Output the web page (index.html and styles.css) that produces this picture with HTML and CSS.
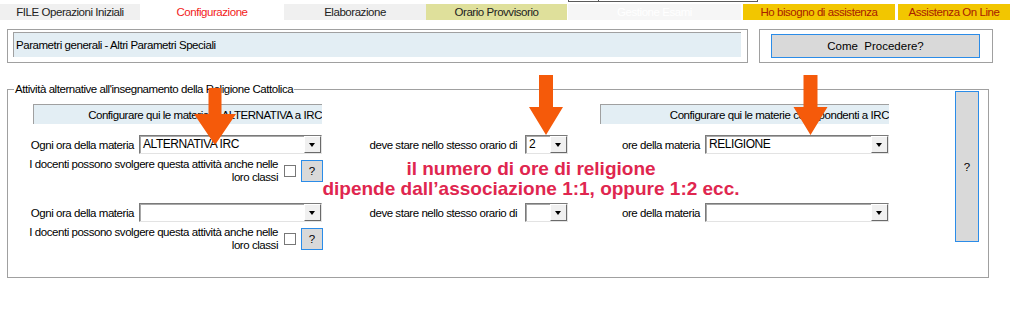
FILE: index.html
```html
<!DOCTYPE html>
<html>
<head>
	<title>Configurazione</title>
	<meta charset="UTF-8">
	<link rel="stylesheet" href="styles.css">
</head>
<body>
	<nav class="tabs">
		<span class="tab tab-file">FILE Operazioni Iniziali</span>
		<span class="tab tab-active">Configurazione</span>
		<span class="tab tab-elab">Elaborazione</span>
		<span class="tab tab-orario">Orario Provvisorio</span>
		<span class="tab tab-esami">Gestione Esami</span>
		<span class="tab tab-help">Ho bisogno di assistenza</span>
		<span class="tab tab-online">Assistenza On Line</span>
	</nav>
	<div class="popup-edge"><div class="popup-edge-cell"></div></div>

	<div class="header-row">
		<div class="header-box">
			<div class="panel panel-title">Parametri generali - Altri Parametri Speciali</div>
		</div>
		<div class="action-box">
			<button type="button" class="btn btn-wide">Come&nbsp; Procedere?</button>
		</div>
	</div>

	<fieldset class="group">
		<legend>Attività alternative all'insegnamento della Religione Cattolica</legend>
		<div class="group-body">
			<div class="grid">
				<div class="panel panel-left">Configurare qui le materie di ALTERNATIVA a IRC</div>
				<div class="panel panel-right">Configurare qui le materie corrispondenti a IRC</div>

				<!-- first association -->
				<label class="lbl c1">Ogni ora della materia</label>
				<div class="combo c2"><span class="combo-value">ALTERNATIVA IRC</span><span class="combo-btn"></span></div>
				<label class="lbl c3">deve stare nello stesso orario di</label>
				<div class="combo c4"><span class="combo-value">2</span><span class="combo-btn"></span></div>
				<label class="lbl c5">ore della materia</label>
				<div class="combo c6"><span class="combo-value">RELIGIONE</span><span class="combo-btn"></span></div>
				<div class="docenti docenti-first">
					<span class="docenti-text">I docenti possono svolgere questa attività anche nelle<br>loro classi</span>
					<span class="check"></span>
					<button type="button" class="btn btn-small">?</button>
				</div>

				<!-- second association -->
				<label class="lbl c1">Ogni ora della materia</label>
				<div class="combo c2"><span class="combo-value"></span><span class="combo-btn"></span></div>
				<label class="lbl c3">deve stare nello stesso orario di</label>
				<div class="combo c4"><span class="combo-value"></span><span class="combo-btn"></span></div>
				<label class="lbl c5">ore della materia</label>
				<div class="combo c6"><span class="combo-value"></span><span class="combo-btn"></span></div>
				<div class="docenti">
					<span class="docenti-text">I docenti possono svolgere questa attività anche nelle<br>loro classi</span>
					<span class="check"></span>
					<button type="button" class="btn btn-small">?</button>
				</div>
			</div>
			<button type="button" class="btn btn-tall">?</button>

			<p class="note">il numero di ore di religione<br>dipende dall’associazione 1:1, oppure 1:2 ecc.</p>
		</div>
	</fieldset>

	<!-- annotation arrows -->
	<svg class="arrows" width="1010" height="314" viewBox="0 0 1010 314">
		<polygon points="208.5,88 221.5,88 221.5,114 236,114 215,145 194,114 208.5,114"/>
		<polygon points="539,75 553,75 553,107 563,107 546,135 529,107 539,107"/>
		<polygon points="803.5,75 817.5,75 817.5,107 827.5,107 810.5,135 793.5,107 803.5,107"/>
	</svg>
</body>
</html>
```

FILE: styles.css
```css
* { box-sizing: border-box; }
body {
	margin: 0;
	position: relative;
	height: 314px;
	overflow: hidden;
	background: #fff;
	color: #000;
	font-family: "Liberation Sans", Arial, sans-serif;
	font-size: 11.5px;
	letter-spacing: -0.45px;
}

/* top tabs */
.tabs {
	display: flex;
	height: 16px;
	margin-top: 4px;
}

.tab {
	display: flex;
	align-items: center;
	justify-content: center;
	white-space: nowrap;
	color: #222;
}

.tab-file { width: 140px; background: #f0f0f0; }
.tab-active { width: 144px; background: #fff; color: #f21c1c; }
.tab-elab { width: 142px; background: #f0f0f0; }
.tab-orario { width: 141px; background: #dfe09b; }
.tab-esami { width: 173px; margin-left: 1px; background: #f6f6f6; color: #fff; }
.tab-help { width: 152px; margin-left: 2px; background: #f2c600; color: #a82000; }
.tab-online { width: 112px; margin-left: 3px; background: #f2c600; color: #a82000; }

.popup-edge {
	position: absolute;
	top: 0;
	left: 568px;
	width: 190px;
	height: 2px;
	border: 1px solid #5a5a5a;
	border-top: 0;
}

.popup-edge-cell {
	width: 30px;
	height: 1px;
	border-right: 1px solid #5a5a5a;
}

/* title row */
.header-row {
	display: flex;
	margin: 9px 0 0 7px;
}

.header-box {
	width: 741px;
	height: 34px;
	padding: 2px 6px 5px 5px;
	border: 1px solid #a0a0a0;
}

.action-box {
	width: 234px;
	height: 34px;
	margin-left: 11px;
	padding: 4px 0 0 11px;
	border: 1px solid #a0a0a0;
}

.panel {
	display: flex;
	align-items: center;
	background: #e3eef4;
	border-top: 1px solid #a0a0a0;
	border-left: 1px solid #a0a0a0;
	white-space: nowrap;
	overflow: hidden;
}

.panel-title {
	height: 25px;
	padding-left: 2px;
}

.btn {
	padding: 0;
	background: #d9d9d9;
	border: 1px solid #2b8ce8;
	font: inherit;
	color: #000;
}

.btn-wide {
	width: 209px;
	height: 24px;
}

/* group box */
.group {
	width: 982px;
	height: 196px;
	margin: 19px 0 0 7px;
	padding: 8px 9px 0 12px;
	border: 1px solid #a0a0a0;
}

.group legend {
	margin-left: -6px;
	padding: 0 1px;
	line-height: 14px;
}

.group-body {
	position: relative;
	display: flex;
	align-items: flex-start;
}

.grid {
	display: grid;
	grid-template-columns: 119px 183px 203px 43px 137px 184px;
	align-items: center;
}

.panel-left,
.panel-right {
	height: 20px;
	margin-bottom: 11px;
	justify-content: flex-end;
}

.panel-left { grid-column: 1 / 3; margin-left: 13px; }
.panel-right { grid-column: 5 / 7; margin-left: 32px; }

.lbl {
	text-align: right;
	white-space: nowrap;
	padding-right: 5px;
}

.c1 { grid-column: 1; }
.c2 { grid-column: 2; }
.c3 { grid-column: 3; padding-right: 8px; }
.c4 { grid-column: 4; }
.c5 { grid-column: 5; }
.c6 { grid-column: 6; }

.combo {
	display: flex;
	height: 19px;
	background: #fff;
	border: 1px solid #e3e3e3;
	border-top-color: #7a7a7a;
	border-left-color: #7a7a7a;
	box-shadow: inset 1px 1px 0 #a8a8a8;
}

.combo-value {
	flex: 1;
	padding: 1px 0 0 3px;
	line-height: 15px;
	font-size: 12px;
	white-space: nowrap;
	overflow: hidden;
}

.combo-btn {
	position: relative;
	flex-shrink: 0;
	width: 17px;
	background: #f0f0f0;
	border: 1px solid #fff;
	border-right-color: #6a6a6a;
	border-bottom-color: #6a6a6a;
}

.combo-btn::after {
	content: "";
	position: absolute;
	left: 4px;
	top: 6px;
	border-left: 3.5px solid transparent;
	border-right: 3.5px solid transparent;
	border-top: 4px solid #000;
}

.docenti {
	grid-column: 1 / 3;
	display: flex;
	align-items: center;
	justify-content: flex-end;
	height: 26px;
	margin-top: 4px;
}

.docenti-first { margin-bottom: 19px; }

.docenti-text {
	text-align: right;
	line-height: 13px;
	white-space: nowrap;
}

.check {
	flex-shrink: 0;
	width: 12px;
	height: 12px;
	margin-left: 6px;
	background: #fff;
	border: 1px solid #777;
}

.btn-small {
	flex-shrink: 0;
	width: 22px;
	height: 22px;
	margin-left: 5px;
	margin-right: -1px;
}

.btn-tall {
	flex-shrink: 0;
	width: 24px;
	height: 151px;
	margin: -13px 0 0 auto;
}

.note {
	position: absolute;
	left: 291px;
	top: 55px;
	width: 440px;
	margin: 0;
	text-align: center;
	font-size: 19px;
	font-weight: bold;
	line-height: 20px;
	letter-spacing: 0;
	color: #e0264f;
}

.arrows {
	position: absolute;
	top: 0;
	left: 0;
	fill: #f55a0a;
	pointer-events: none;
}
```
